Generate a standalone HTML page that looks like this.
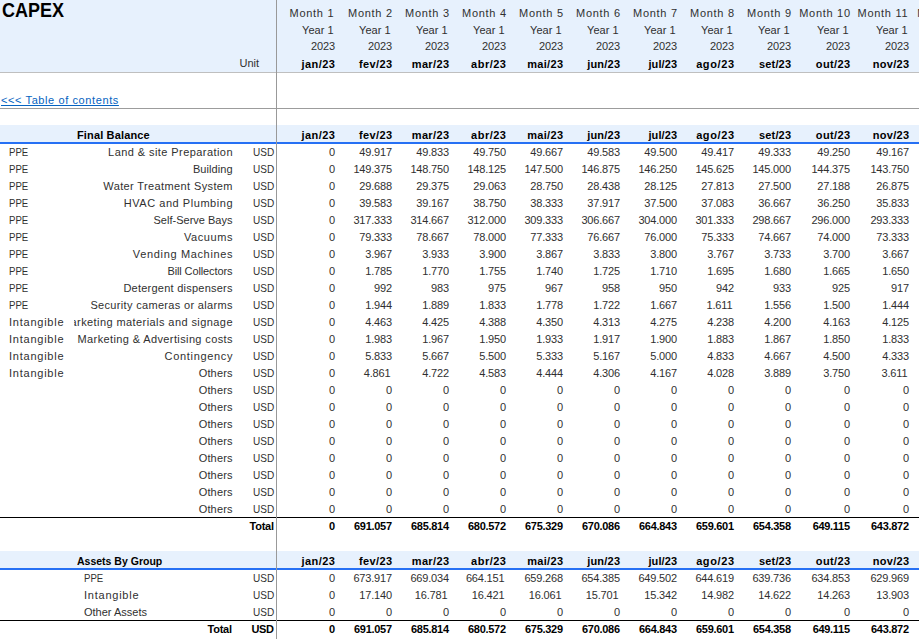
<!DOCTYPE html>
<html><head><meta charset="utf-8"><style>
html,body{margin:0;padding:0;background:#fff;}
body{width:919px;height:639px;position:relative;overflow:hidden;font-family:"Liberation Sans",sans-serif;color:#303030;}
.t{position:absolute;white-space:nowrap;font-size:11px;line-height:20px;}
.r{position:absolute;}
.clip{position:absolute;overflow:hidden;}
</style></head><body>
<div class="r" style="left:0px;top:0px;width:919px;height:72px;background:#e7f1fd"></div><div class="r" style="left:0px;top:72px;width:919px;height:1px;background:#bfbfbf"></div><div class="r" style="left:0px;top:108px;width:919px;height:1px;background:#9c9c9c"></div><div class="r" style="left:0px;top:125px;width:919px;height:17px;background:#e7f1fd"></div><div class="r" style="left:0px;top:142px;width:919px;height:2px;background:#2670f4"></div><div class="r" style="left:0px;top:517px;width:919px;height:1px;background:#000"></div><div class="r" style="left:0px;top:551px;width:919px;height:17px;background:#e7f1fd"></div><div class="r" style="left:0px;top:568px;width:919px;height:2px;background:#2670f4"></div><div class="r" style="left:0px;top:620px;width:919px;height:1px;background:#000"></div><div class="r" style="left:276px;top:0px;width:1px;height:639px;background:#999"></div>
<div class="t" style="top:0.07px;font-size:20px;line-height:20px;font-weight:bold;color:#000;transform:scaleX(0.899);transform-origin:left center;left:2px;">CAPEX</div>
<div class="t" style="top:3.19px;font-size:11px;letter-spacing:0.70px;right:584.80px;">Month 1</div>
<div class="t" style="top:20.19px;font-size:11px;right:585.50px;">Year 1</div>
<div class="t" style="top:36.19px;font-size:11px;letter-spacing:-0.15px;right:584.15px;">2023</div>
<div class="t" style="top:54.19px;font-size:11px;font-weight:bold;color:#000;letter-spacing:0.48px;right:583.52px;">jan/23</div>
<div class="t" style="top:3.19px;font-size:11px;letter-spacing:0.70px;right:526.30px;">Month 2</div>
<div class="t" style="top:20.19px;font-size:11px;right:528.50px;">Year 1</div>
<div class="t" style="top:36.19px;font-size:11px;letter-spacing:-0.15px;right:527.15px;">2023</div>
<div class="t" style="top:54.19px;font-size:11px;font-weight:bold;color:#000;letter-spacing:0.34px;right:526.66px;">fev/23</div>
<div class="t" style="top:3.19px;font-size:11px;letter-spacing:0.70px;right:469.30px;">Month 3</div>
<div class="t" style="top:20.19px;font-size:11px;right:471.50px;">Year 1</div>
<div class="t" style="top:36.19px;font-size:11px;letter-spacing:-0.15px;right:470.15px;">2023</div>
<div class="t" style="top:54.19px;font-size:11px;font-weight:bold;color:#000;letter-spacing:0.36px;right:469.64px;">mar/23</div>
<div class="t" style="top:3.19px;font-size:11px;letter-spacing:0.70px;right:412.30px;">Month 4</div>
<div class="t" style="top:20.19px;font-size:11px;right:414.50px;">Year 1</div>
<div class="t" style="top:36.19px;font-size:11px;letter-spacing:-0.15px;right:413.15px;">2023</div>
<div class="t" style="top:54.19px;font-size:11px;font-weight:bold;color:#000;letter-spacing:0.50px;right:412.50px;">abr/23</div>
<div class="t" style="top:3.19px;font-size:11px;letter-spacing:0.70px;right:355.30px;">Month 5</div>
<div class="t" style="top:20.19px;font-size:11px;right:357.50px;">Year 1</div>
<div class="t" style="top:36.19px;font-size:11px;letter-spacing:-0.15px;right:356.15px;">2023</div>
<div class="t" style="top:54.19px;font-size:11px;font-weight:bold;color:#000;letter-spacing:0.32px;right:355.68px;">mai/23</div>
<div class="t" style="top:3.19px;font-size:11px;letter-spacing:0.70px;right:298.30px;">Month 6</div>
<div class="t" style="top:20.19px;font-size:11px;right:300.50px;">Year 1</div>
<div class="t" style="top:36.19px;font-size:11px;letter-spacing:-0.15px;right:299.15px;">2023</div>
<div class="t" style="top:54.19px;font-size:11px;font-weight:bold;color:#000;letter-spacing:0.22px;right:298.78px;">jun/23</div>
<div class="t" style="top:3.19px;font-size:11px;letter-spacing:0.70px;right:241.30px;">Month 7</div>
<div class="t" style="top:20.19px;font-size:11px;right:243.50px;">Year 1</div>
<div class="t" style="top:36.19px;font-size:11px;letter-spacing:-0.15px;right:242.15px;">2023</div>
<div class="t" style="top:54.19px;font-size:11px;font-weight:bold;color:#000;letter-spacing:0.08px;right:241.92px;">jul/23</div>
<div class="t" style="top:3.19px;font-size:11px;letter-spacing:0.70px;right:184.30px;">Month 8</div>
<div class="t" style="top:20.19px;font-size:11px;right:186.50px;">Year 1</div>
<div class="t" style="top:36.19px;font-size:11px;letter-spacing:-0.15px;right:185.15px;">2023</div>
<div class="t" style="top:54.19px;font-size:11px;font-weight:bold;color:#000;letter-spacing:0.60px;right:184.40px;">ago/23</div>
<div class="t" style="top:3.19px;font-size:11px;letter-spacing:0.70px;right:127.30px;">Month 9</div>
<div class="t" style="top:20.19px;font-size:11px;right:129.50px;">Year 1</div>
<div class="t" style="top:36.19px;font-size:11px;letter-spacing:-0.15px;right:128.15px;">2023</div>
<div class="t" style="top:54.19px;font-size:11px;font-weight:bold;color:#000;letter-spacing:0.14px;right:127.86px;">set/23</div>
<div class="t" style="top:3.19px;font-size:11px;letter-spacing:0.70px;right:68.30px;">Month 10</div>
<div class="t" style="top:20.19px;font-size:11px;right:70.50px;">Year 1</div>
<div class="t" style="top:36.19px;font-size:11px;letter-spacing:-0.15px;right:69.15px;">2023</div>
<div class="t" style="top:54.19px;font-size:11px;font-weight:bold;color:#000;letter-spacing:0.36px;right:68.64px;">out/23</div>
<div class="t" style="top:3.19px;font-size:11px;letter-spacing:0.70px;right:10.80px;">Month 11</div>
<div class="t" style="top:20.19px;font-size:11px;right:11.50px;">Year 1</div>
<div class="t" style="top:36.19px;font-size:11px;letter-spacing:-0.15px;right:10.15px;">2023</div>
<div class="t" style="top:54.19px;font-size:11px;font-weight:bold;color:#000;letter-spacing:0.28px;right:9.72px;">nov/23</div>
<div class="t" style="top:3.19px;font-size:11px;letter-spacing:0.70px;right:-49.70px;">Month 12</div>
<div class="t" style="top:20.19px;font-size:11px;right:-47.50px;">Year 1</div>
<div class="t" style="top:36.19px;font-size:11px;letter-spacing:-0.15px;right:-48.85px;">2023</div>
<div class="t" style="top:54.19px;font-size:11px;font-weight:bold;color:#000;letter-spacing:0.50px;right:-49.50px;">dez/23</div>
<div class="t" style="top:53.19px;font-size:11px;right:660.00px;">Unit</div>
<div class="t" style="top:90.19px;font-size:11px;color:#0563c1;letter-spacing:0.60px;left:1px;text-decoration:underline;">&lt;&lt;&lt; Table of contents</div>
<div class="t" style="top:125.19px;font-size:11px;font-weight:bold;color:#000;letter-spacing:0.15px;left:77px;">Final Balance</div>
<div class="t" style="top:125.19px;font-size:11px;font-weight:bold;color:#000;letter-spacing:0.48px;right:583.52px;">jan/23</div>
<div class="t" style="top:125.19px;font-size:11px;font-weight:bold;color:#000;letter-spacing:0.34px;right:526.66px;">fev/23</div>
<div class="t" style="top:125.19px;font-size:11px;font-weight:bold;color:#000;letter-spacing:0.36px;right:469.64px;">mar/23</div>
<div class="t" style="top:125.19px;font-size:11px;font-weight:bold;color:#000;letter-spacing:0.50px;right:412.50px;">abr/23</div>
<div class="t" style="top:125.19px;font-size:11px;font-weight:bold;color:#000;letter-spacing:0.32px;right:355.68px;">mai/23</div>
<div class="t" style="top:125.19px;font-size:11px;font-weight:bold;color:#000;letter-spacing:0.22px;right:298.78px;">jun/23</div>
<div class="t" style="top:125.19px;font-size:11px;font-weight:bold;color:#000;letter-spacing:0.08px;right:241.92px;">jul/23</div>
<div class="t" style="top:125.19px;font-size:11px;font-weight:bold;color:#000;letter-spacing:0.60px;right:184.40px;">ago/23</div>
<div class="t" style="top:125.19px;font-size:11px;font-weight:bold;color:#000;letter-spacing:0.14px;right:127.86px;">set/23</div>
<div class="t" style="top:125.19px;font-size:11px;font-weight:bold;color:#000;letter-spacing:0.36px;right:68.64px;">out/23</div>
<div class="t" style="top:125.19px;font-size:11px;font-weight:bold;color:#000;letter-spacing:0.28px;right:9.72px;">nov/23</div>
<div class="t" style="top:125.19px;font-size:11px;font-weight:bold;color:#000;letter-spacing:0.50px;right:-49.50px;">dez/23</div>
<div class="t" style="top:142.19px;font-size:11px;transform:scaleX(0.875);transform-origin:left center;left:9px;">PPE</div>
<div class="clip" style="left:74px;top:142.19px;width:162px;height:20px;"><div class="t" style="top:0;font-size:11px;letter-spacing:0.43px;right:3.07px;">Land &amp; site Preparation</div></div>
<div class="t" style="top:142.19px;font-size:11px;transform:scaleX(0.913);transform-origin:right center;right:645.00px;">USD</div>
<div class="t" style="top:142.19px;font-size:11px;letter-spacing:-0.20px;right:584.20px;">0</div>
<div class="t" style="top:142.19px;font-size:11px;letter-spacing:-0.20px;right:527.20px;">49.917</div>
<div class="t" style="top:142.19px;font-size:11px;letter-spacing:-0.20px;right:470.20px;">49.833</div>
<div class="t" style="top:142.19px;font-size:11px;letter-spacing:-0.20px;right:413.20px;">49.750</div>
<div class="t" style="top:142.19px;font-size:11px;letter-spacing:-0.20px;right:356.20px;">49.667</div>
<div class="t" style="top:142.19px;font-size:11px;letter-spacing:-0.20px;right:299.20px;">49.583</div>
<div class="t" style="top:142.19px;font-size:11px;letter-spacing:-0.20px;right:242.20px;">49.500</div>
<div class="t" style="top:142.19px;font-size:11px;letter-spacing:-0.20px;right:185.20px;">49.417</div>
<div class="t" style="top:142.19px;font-size:11px;letter-spacing:-0.20px;right:128.20px;">49.333</div>
<div class="t" style="top:142.19px;font-size:11px;letter-spacing:-0.20px;right:69.20px;">49.250</div>
<div class="t" style="top:142.19px;font-size:11px;letter-spacing:-0.20px;right:10.20px;">49.167</div>
<div class="t" style="top:159.19px;font-size:11px;transform:scaleX(0.875);transform-origin:left center;left:9px;">PPE</div>
<div class="clip" style="left:74px;top:159.19px;width:162px;height:20px;"><div class="t" style="top:0;font-size:11px;letter-spacing:0.07px;right:3.43px;">Building</div></div>
<div class="t" style="top:159.19px;font-size:11px;transform:scaleX(0.913);transform-origin:right center;right:645.00px;">USD</div>
<div class="t" style="top:159.19px;font-size:11px;letter-spacing:-0.20px;right:584.20px;">0</div>
<div class="t" style="top:159.19px;font-size:11px;letter-spacing:-0.20px;right:527.20px;">149.375</div>
<div class="t" style="top:159.19px;font-size:11px;letter-spacing:-0.20px;right:470.20px;">148.750</div>
<div class="t" style="top:159.19px;font-size:11px;letter-spacing:-0.20px;right:413.20px;">148.125</div>
<div class="t" style="top:159.19px;font-size:11px;letter-spacing:-0.20px;right:356.20px;">147.500</div>
<div class="t" style="top:159.19px;font-size:11px;letter-spacing:-0.20px;right:299.20px;">146.875</div>
<div class="t" style="top:159.19px;font-size:11px;letter-spacing:-0.20px;right:242.20px;">146.250</div>
<div class="t" style="top:159.19px;font-size:11px;letter-spacing:-0.20px;right:185.20px;">145.625</div>
<div class="t" style="top:159.19px;font-size:11px;letter-spacing:-0.20px;right:128.20px;">145.000</div>
<div class="t" style="top:159.19px;font-size:11px;letter-spacing:-0.20px;right:69.20px;">144.375</div>
<div class="t" style="top:159.19px;font-size:11px;letter-spacing:-0.20px;right:10.20px;">143.750</div>
<div class="t" style="top:176.19px;font-size:11px;transform:scaleX(0.875);transform-origin:left center;left:9px;">PPE</div>
<div class="clip" style="left:74px;top:176.19px;width:162px;height:20px;"><div class="t" style="top:0;font-size:11px;letter-spacing:0.38px;right:3.12px;">Water Treatment System</div></div>
<div class="t" style="top:176.19px;font-size:11px;transform:scaleX(0.913);transform-origin:right center;right:645.00px;">USD</div>
<div class="t" style="top:176.19px;font-size:11px;letter-spacing:-0.20px;right:584.20px;">0</div>
<div class="t" style="top:176.19px;font-size:11px;letter-spacing:-0.20px;right:527.20px;">29.688</div>
<div class="t" style="top:176.19px;font-size:11px;letter-spacing:-0.20px;right:470.20px;">29.375</div>
<div class="t" style="top:176.19px;font-size:11px;letter-spacing:-0.20px;right:413.20px;">29.063</div>
<div class="t" style="top:176.19px;font-size:11px;letter-spacing:-0.20px;right:356.20px;">28.750</div>
<div class="t" style="top:176.19px;font-size:11px;letter-spacing:-0.20px;right:299.20px;">28.438</div>
<div class="t" style="top:176.19px;font-size:11px;letter-spacing:-0.20px;right:242.20px;">28.125</div>
<div class="t" style="top:176.19px;font-size:11px;letter-spacing:-0.20px;right:185.20px;">27.813</div>
<div class="t" style="top:176.19px;font-size:11px;letter-spacing:-0.20px;right:128.20px;">27.500</div>
<div class="t" style="top:176.19px;font-size:11px;letter-spacing:-0.20px;right:69.20px;">27.188</div>
<div class="t" style="top:176.19px;font-size:11px;letter-spacing:-0.20px;right:10.20px;">26.875</div>
<div class="t" style="top:193.19px;font-size:11px;transform:scaleX(0.875);transform-origin:left center;left:9px;">PPE</div>
<div class="clip" style="left:74px;top:193.19px;width:162px;height:20px;"><div class="t" style="top:0;font-size:11px;letter-spacing:0.54px;right:2.96px;">HVAC and Plumbing</div></div>
<div class="t" style="top:193.19px;font-size:11px;transform:scaleX(0.913);transform-origin:right center;right:645.00px;">USD</div>
<div class="t" style="top:193.19px;font-size:11px;letter-spacing:-0.20px;right:584.20px;">0</div>
<div class="t" style="top:193.19px;font-size:11px;letter-spacing:-0.20px;right:527.20px;">39.583</div>
<div class="t" style="top:193.19px;font-size:11px;letter-spacing:-0.20px;right:470.20px;">39.167</div>
<div class="t" style="top:193.19px;font-size:11px;letter-spacing:-0.20px;right:413.20px;">38.750</div>
<div class="t" style="top:193.19px;font-size:11px;letter-spacing:-0.20px;right:356.20px;">38.333</div>
<div class="t" style="top:193.19px;font-size:11px;letter-spacing:-0.20px;right:299.20px;">37.917</div>
<div class="t" style="top:193.19px;font-size:11px;letter-spacing:-0.20px;right:242.20px;">37.500</div>
<div class="t" style="top:193.19px;font-size:11px;letter-spacing:-0.20px;right:185.20px;">37.083</div>
<div class="t" style="top:193.19px;font-size:11px;letter-spacing:-0.20px;right:128.20px;">36.667</div>
<div class="t" style="top:193.19px;font-size:11px;letter-spacing:-0.20px;right:69.20px;">36.250</div>
<div class="t" style="top:193.19px;font-size:11px;letter-spacing:-0.20px;right:10.20px;">35.833</div>
<div class="t" style="top:210.19px;font-size:11px;transform:scaleX(0.875);transform-origin:left center;left:9px;">PPE</div>
<div class="clip" style="left:74px;top:210.19px;width:162px;height:20px;"><div class="t" style="top:0;font-size:11px;letter-spacing:0.01px;right:3.49px;">Self-Serve Bays</div></div>
<div class="t" style="top:210.19px;font-size:11px;transform:scaleX(0.913);transform-origin:right center;right:645.00px;">USD</div>
<div class="t" style="top:210.19px;font-size:11px;letter-spacing:-0.20px;right:584.20px;">0</div>
<div class="t" style="top:210.19px;font-size:11px;letter-spacing:-0.20px;right:527.20px;">317.333</div>
<div class="t" style="top:210.19px;font-size:11px;letter-spacing:-0.20px;right:470.20px;">314.667</div>
<div class="t" style="top:210.19px;font-size:11px;letter-spacing:-0.20px;right:413.20px;">312.000</div>
<div class="t" style="top:210.19px;font-size:11px;letter-spacing:-0.20px;right:356.20px;">309.333</div>
<div class="t" style="top:210.19px;font-size:11px;letter-spacing:-0.20px;right:299.20px;">306.667</div>
<div class="t" style="top:210.19px;font-size:11px;letter-spacing:-0.20px;right:242.20px;">304.000</div>
<div class="t" style="top:210.19px;font-size:11px;letter-spacing:-0.20px;right:185.20px;">301.333</div>
<div class="t" style="top:210.19px;font-size:11px;letter-spacing:-0.20px;right:128.20px;">298.667</div>
<div class="t" style="top:210.19px;font-size:11px;letter-spacing:-0.20px;right:69.20px;">296.000</div>
<div class="t" style="top:210.19px;font-size:11px;letter-spacing:-0.20px;right:10.20px;">293.333</div>
<div class="t" style="top:227.19px;font-size:11px;transform:scaleX(0.875);transform-origin:left center;left:9px;">PPE</div>
<div class="clip" style="left:74px;top:227.19px;width:162px;height:20px;"><div class="t" style="top:0;font-size:11px;letter-spacing:0.58px;right:2.92px;">Vacuums</div></div>
<div class="t" style="top:227.19px;font-size:11px;transform:scaleX(0.913);transform-origin:right center;right:645.00px;">USD</div>
<div class="t" style="top:227.19px;font-size:11px;letter-spacing:-0.20px;right:584.20px;">0</div>
<div class="t" style="top:227.19px;font-size:11px;letter-spacing:-0.20px;right:527.20px;">79.333</div>
<div class="t" style="top:227.19px;font-size:11px;letter-spacing:-0.20px;right:470.20px;">78.667</div>
<div class="t" style="top:227.19px;font-size:11px;letter-spacing:-0.20px;right:413.20px;">78.000</div>
<div class="t" style="top:227.19px;font-size:11px;letter-spacing:-0.20px;right:356.20px;">77.333</div>
<div class="t" style="top:227.19px;font-size:11px;letter-spacing:-0.20px;right:299.20px;">76.667</div>
<div class="t" style="top:227.19px;font-size:11px;letter-spacing:-0.20px;right:242.20px;">76.000</div>
<div class="t" style="top:227.19px;font-size:11px;letter-spacing:-0.20px;right:185.20px;">75.333</div>
<div class="t" style="top:227.19px;font-size:11px;letter-spacing:-0.20px;right:128.20px;">74.667</div>
<div class="t" style="top:227.19px;font-size:11px;letter-spacing:-0.20px;right:69.20px;">74.000</div>
<div class="t" style="top:227.19px;font-size:11px;letter-spacing:-0.20px;right:10.20px;">73.333</div>
<div class="t" style="top:244.19px;font-size:11px;transform:scaleX(0.875);transform-origin:left center;left:9px;">PPE</div>
<div class="clip" style="left:74px;top:244.19px;width:162px;height:20px;"><div class="t" style="top:0;font-size:11px;letter-spacing:0.65px;right:2.85px;">Vending Machines</div></div>
<div class="t" style="top:244.19px;font-size:11px;transform:scaleX(0.913);transform-origin:right center;right:645.00px;">USD</div>
<div class="t" style="top:244.19px;font-size:11px;letter-spacing:-0.20px;right:584.20px;">0</div>
<div class="t" style="top:244.19px;font-size:11px;letter-spacing:-0.20px;right:527.20px;">3.967</div>
<div class="t" style="top:244.19px;font-size:11px;letter-spacing:-0.20px;right:470.20px;">3.933</div>
<div class="t" style="top:244.19px;font-size:11px;letter-spacing:-0.20px;right:413.20px;">3.900</div>
<div class="t" style="top:244.19px;font-size:11px;letter-spacing:-0.20px;right:356.20px;">3.867</div>
<div class="t" style="top:244.19px;font-size:11px;letter-spacing:-0.20px;right:299.20px;">3.833</div>
<div class="t" style="top:244.19px;font-size:11px;letter-spacing:-0.20px;right:242.20px;">3.800</div>
<div class="t" style="top:244.19px;font-size:11px;letter-spacing:-0.20px;right:185.20px;">3.767</div>
<div class="t" style="top:244.19px;font-size:11px;letter-spacing:-0.20px;right:128.20px;">3.733</div>
<div class="t" style="top:244.19px;font-size:11px;letter-spacing:-0.20px;right:69.20px;">3.700</div>
<div class="t" style="top:244.19px;font-size:11px;letter-spacing:-0.20px;right:10.20px;">3.667</div>
<div class="t" style="top:261.19px;font-size:11px;transform:scaleX(0.875);transform-origin:left center;left:9px;">PPE</div>
<div class="clip" style="left:74px;top:261.19px;width:162px;height:20px;"><div class="t" style="top:0;font-size:11px;letter-spacing:-0.11px;right:3.61px;">Bill Collectors</div></div>
<div class="t" style="top:261.19px;font-size:11px;transform:scaleX(0.913);transform-origin:right center;right:645.00px;">USD</div>
<div class="t" style="top:261.19px;font-size:11px;letter-spacing:-0.20px;right:584.20px;">0</div>
<div class="t" style="top:261.19px;font-size:11px;letter-spacing:-0.20px;right:527.20px;">1.785</div>
<div class="t" style="top:261.19px;font-size:11px;letter-spacing:-0.20px;right:470.20px;">1.770</div>
<div class="t" style="top:261.19px;font-size:11px;letter-spacing:-0.20px;right:413.20px;">1.755</div>
<div class="t" style="top:261.19px;font-size:11px;letter-spacing:-0.20px;right:356.20px;">1.740</div>
<div class="t" style="top:261.19px;font-size:11px;letter-spacing:-0.20px;right:299.20px;">1.725</div>
<div class="t" style="top:261.19px;font-size:11px;letter-spacing:-0.20px;right:242.20px;">1.710</div>
<div class="t" style="top:261.19px;font-size:11px;letter-spacing:-0.20px;right:185.20px;">1.695</div>
<div class="t" style="top:261.19px;font-size:11px;letter-spacing:-0.20px;right:128.20px;">1.680</div>
<div class="t" style="top:261.19px;font-size:11px;letter-spacing:-0.20px;right:69.20px;">1.665</div>
<div class="t" style="top:261.19px;font-size:11px;letter-spacing:-0.20px;right:10.20px;">1.650</div>
<div class="t" style="top:278.19px;font-size:11px;transform:scaleX(0.875);transform-origin:left center;left:9px;">PPE</div>
<div class="clip" style="left:74px;top:278.19px;width:162px;height:20px;"><div class="t" style="top:0;font-size:11px;letter-spacing:0.24px;right:3.26px;">Detergent dispensers</div></div>
<div class="t" style="top:278.19px;font-size:11px;transform:scaleX(0.913);transform-origin:right center;right:645.00px;">USD</div>
<div class="t" style="top:278.19px;font-size:11px;letter-spacing:-0.20px;right:584.20px;">0</div>
<div class="t" style="top:278.19px;font-size:11px;letter-spacing:-0.20px;right:527.20px;">992</div>
<div class="t" style="top:278.19px;font-size:11px;letter-spacing:-0.20px;right:470.20px;">983</div>
<div class="t" style="top:278.19px;font-size:11px;letter-spacing:-0.20px;right:413.20px;">975</div>
<div class="t" style="top:278.19px;font-size:11px;letter-spacing:-0.20px;right:356.20px;">967</div>
<div class="t" style="top:278.19px;font-size:11px;letter-spacing:-0.20px;right:299.20px;">958</div>
<div class="t" style="top:278.19px;font-size:11px;letter-spacing:-0.20px;right:242.20px;">950</div>
<div class="t" style="top:278.19px;font-size:11px;letter-spacing:-0.20px;right:185.20px;">942</div>
<div class="t" style="top:278.19px;font-size:11px;letter-spacing:-0.20px;right:128.20px;">933</div>
<div class="t" style="top:278.19px;font-size:11px;letter-spacing:-0.20px;right:69.20px;">925</div>
<div class="t" style="top:278.19px;font-size:11px;letter-spacing:-0.20px;right:10.20px;">917</div>
<div class="t" style="top:295.19px;font-size:11px;transform:scaleX(0.875);transform-origin:left center;left:9px;">PPE</div>
<div class="clip" style="left:74px;top:295.19px;width:162px;height:20px;"><div class="t" style="top:0;font-size:11px;letter-spacing:0.33px;right:3.17px;">Security cameras or alarms</div></div>
<div class="t" style="top:295.19px;font-size:11px;transform:scaleX(0.913);transform-origin:right center;right:645.00px;">USD</div>
<div class="t" style="top:295.19px;font-size:11px;letter-spacing:-0.20px;right:584.20px;">0</div>
<div class="t" style="top:295.19px;font-size:11px;letter-spacing:-0.20px;right:527.20px;">1.944</div>
<div class="t" style="top:295.19px;font-size:11px;letter-spacing:-0.20px;right:470.20px;">1.889</div>
<div class="t" style="top:295.19px;font-size:11px;letter-spacing:-0.20px;right:413.20px;">1.833</div>
<div class="t" style="top:295.19px;font-size:11px;letter-spacing:-0.20px;right:356.20px;">1.778</div>
<div class="t" style="top:295.19px;font-size:11px;letter-spacing:-0.20px;right:299.20px;">1.722</div>
<div class="t" style="top:295.19px;font-size:11px;letter-spacing:-0.20px;right:242.20px;">1.667</div>
<div class="t" style="top:295.19px;font-size:11px;letter-spacing:-0.20px;right:186.70px;">1.611</div>
<div class="t" style="top:295.19px;font-size:11px;letter-spacing:-0.20px;right:128.20px;">1.556</div>
<div class="t" style="top:295.19px;font-size:11px;letter-spacing:-0.20px;right:69.20px;">1.500</div>
<div class="t" style="top:295.19px;font-size:11px;letter-spacing:-0.20px;right:10.20px;">1.444</div>
<div class="t" style="top:312.19px;font-size:11px;letter-spacing:0.76px;left:9px;">Intangible</div>
<div class="clip" style="left:74px;top:312.19px;width:162px;height:20px;"><div class="t" style="top:0;font-size:11px;letter-spacing:0.42px;right:3.08px;">Marketing materials and signage</div></div>
<div class="t" style="top:312.19px;font-size:11px;transform:scaleX(0.913);transform-origin:right center;right:645.00px;">USD</div>
<div class="t" style="top:312.19px;font-size:11px;letter-spacing:-0.20px;right:584.20px;">0</div>
<div class="t" style="top:312.19px;font-size:11px;letter-spacing:-0.20px;right:527.20px;">4.463</div>
<div class="t" style="top:312.19px;font-size:11px;letter-spacing:-0.20px;right:470.20px;">4.425</div>
<div class="t" style="top:312.19px;font-size:11px;letter-spacing:-0.20px;right:413.20px;">4.388</div>
<div class="t" style="top:312.19px;font-size:11px;letter-spacing:-0.20px;right:356.20px;">4.350</div>
<div class="t" style="top:312.19px;font-size:11px;letter-spacing:-0.20px;right:299.20px;">4.313</div>
<div class="t" style="top:312.19px;font-size:11px;letter-spacing:-0.20px;right:242.20px;">4.275</div>
<div class="t" style="top:312.19px;font-size:11px;letter-spacing:-0.20px;right:185.20px;">4.238</div>
<div class="t" style="top:312.19px;font-size:11px;letter-spacing:-0.20px;right:128.20px;">4.200</div>
<div class="t" style="top:312.19px;font-size:11px;letter-spacing:-0.20px;right:69.20px;">4.163</div>
<div class="t" style="top:312.19px;font-size:11px;letter-spacing:-0.20px;right:10.20px;">4.125</div>
<div class="t" style="top:329.19px;font-size:11px;letter-spacing:0.76px;left:9px;">Intangible</div>
<div class="clip" style="left:74px;top:329.19px;width:162px;height:20px;"><div class="t" style="top:0;font-size:11px;letter-spacing:0.38px;right:3.12px;">Marketing &amp; Advertising costs</div></div>
<div class="t" style="top:329.19px;font-size:11px;transform:scaleX(0.913);transform-origin:right center;right:645.00px;">USD</div>
<div class="t" style="top:329.19px;font-size:11px;letter-spacing:-0.20px;right:584.20px;">0</div>
<div class="t" style="top:329.19px;font-size:11px;letter-spacing:-0.20px;right:527.20px;">1.983</div>
<div class="t" style="top:329.19px;font-size:11px;letter-spacing:-0.20px;right:470.20px;">1.967</div>
<div class="t" style="top:329.19px;font-size:11px;letter-spacing:-0.20px;right:413.20px;">1.950</div>
<div class="t" style="top:329.19px;font-size:11px;letter-spacing:-0.20px;right:356.20px;">1.933</div>
<div class="t" style="top:329.19px;font-size:11px;letter-spacing:-0.20px;right:299.20px;">1.917</div>
<div class="t" style="top:329.19px;font-size:11px;letter-spacing:-0.20px;right:242.20px;">1.900</div>
<div class="t" style="top:329.19px;font-size:11px;letter-spacing:-0.20px;right:185.20px;">1.883</div>
<div class="t" style="top:329.19px;font-size:11px;letter-spacing:-0.20px;right:128.20px;">1.867</div>
<div class="t" style="top:329.19px;font-size:11px;letter-spacing:-0.20px;right:69.20px;">1.850</div>
<div class="t" style="top:329.19px;font-size:11px;letter-spacing:-0.20px;right:10.20px;">1.833</div>
<div class="t" style="top:346.19px;font-size:11px;letter-spacing:0.76px;left:9px;">Intangible</div>
<div class="clip" style="left:74px;top:346.19px;width:162px;height:20px;"><div class="t" style="top:0;font-size:11px;letter-spacing:0.68px;right:2.82px;">Contingency</div></div>
<div class="t" style="top:346.19px;font-size:11px;transform:scaleX(0.913);transform-origin:right center;right:645.00px;">USD</div>
<div class="t" style="top:346.19px;font-size:11px;letter-spacing:-0.20px;right:584.20px;">0</div>
<div class="t" style="top:346.19px;font-size:11px;letter-spacing:-0.20px;right:527.20px;">5.833</div>
<div class="t" style="top:346.19px;font-size:11px;letter-spacing:-0.20px;right:470.20px;">5.667</div>
<div class="t" style="top:346.19px;font-size:11px;letter-spacing:-0.20px;right:413.20px;">5.500</div>
<div class="t" style="top:346.19px;font-size:11px;letter-spacing:-0.20px;right:356.20px;">5.333</div>
<div class="t" style="top:346.19px;font-size:11px;letter-spacing:-0.20px;right:299.20px;">5.167</div>
<div class="t" style="top:346.19px;font-size:11px;letter-spacing:-0.20px;right:242.20px;">5.000</div>
<div class="t" style="top:346.19px;font-size:11px;letter-spacing:-0.20px;right:185.20px;">4.833</div>
<div class="t" style="top:346.19px;font-size:11px;letter-spacing:-0.20px;right:128.20px;">4.667</div>
<div class="t" style="top:346.19px;font-size:11px;letter-spacing:-0.20px;right:69.20px;">4.500</div>
<div class="t" style="top:346.19px;font-size:11px;letter-spacing:-0.20px;right:10.20px;">4.333</div>
<div class="t" style="top:363.19px;font-size:11px;letter-spacing:0.76px;left:9px;">Intangible</div>
<div class="clip" style="left:74px;top:363.19px;width:162px;height:20px;"><div class="t" style="top:0;font-size:11px;letter-spacing:0.16px;right:3.34px;">Others</div></div>
<div class="t" style="top:363.19px;font-size:11px;transform:scaleX(0.913);transform-origin:right center;right:645.00px;">USD</div>
<div class="t" style="top:363.19px;font-size:11px;letter-spacing:-0.20px;right:584.20px;">0</div>
<div class="t" style="top:363.19px;font-size:11px;letter-spacing:-0.20px;right:528.70px;">4.861</div>
<div class="t" style="top:363.19px;font-size:11px;letter-spacing:-0.20px;right:470.20px;">4.722</div>
<div class="t" style="top:363.19px;font-size:11px;letter-spacing:-0.20px;right:413.20px;">4.583</div>
<div class="t" style="top:363.19px;font-size:11px;letter-spacing:-0.20px;right:356.20px;">4.444</div>
<div class="t" style="top:363.19px;font-size:11px;letter-spacing:-0.20px;right:299.20px;">4.306</div>
<div class="t" style="top:363.19px;font-size:11px;letter-spacing:-0.20px;right:242.20px;">4.167</div>
<div class="t" style="top:363.19px;font-size:11px;letter-spacing:-0.20px;right:185.20px;">4.028</div>
<div class="t" style="top:363.19px;font-size:11px;letter-spacing:-0.20px;right:128.20px;">3.889</div>
<div class="t" style="top:363.19px;font-size:11px;letter-spacing:-0.20px;right:69.20px;">3.750</div>
<div class="t" style="top:363.19px;font-size:11px;letter-spacing:-0.20px;right:11.70px;">3.611</div>
<div class="clip" style="left:74px;top:380.19px;width:162px;height:20px;"><div class="t" style="top:0;font-size:11px;letter-spacing:0.16px;right:3.34px;">Others</div></div>
<div class="t" style="top:380.19px;font-size:11px;transform:scaleX(0.913);transform-origin:right center;right:645.00px;">USD</div>
<div class="t" style="top:380.19px;font-size:11px;letter-spacing:-0.20px;right:584.20px;">0</div>
<div class="t" style="top:380.19px;font-size:11px;letter-spacing:-0.20px;right:527.20px;">0</div>
<div class="t" style="top:380.19px;font-size:11px;letter-spacing:-0.20px;right:470.20px;">0</div>
<div class="t" style="top:380.19px;font-size:11px;letter-spacing:-0.20px;right:413.20px;">0</div>
<div class="t" style="top:380.19px;font-size:11px;letter-spacing:-0.20px;right:356.20px;">0</div>
<div class="t" style="top:380.19px;font-size:11px;letter-spacing:-0.20px;right:299.20px;">0</div>
<div class="t" style="top:380.19px;font-size:11px;letter-spacing:-0.20px;right:242.20px;">0</div>
<div class="t" style="top:380.19px;font-size:11px;letter-spacing:-0.20px;right:185.20px;">0</div>
<div class="t" style="top:380.19px;font-size:11px;letter-spacing:-0.20px;right:128.20px;">0</div>
<div class="t" style="top:380.19px;font-size:11px;letter-spacing:-0.20px;right:69.20px;">0</div>
<div class="t" style="top:380.19px;font-size:11px;letter-spacing:-0.20px;right:10.20px;">0</div>
<div class="clip" style="left:74px;top:397.19px;width:162px;height:20px;"><div class="t" style="top:0;font-size:11px;letter-spacing:0.16px;right:3.34px;">Others</div></div>
<div class="t" style="top:397.19px;font-size:11px;transform:scaleX(0.913);transform-origin:right center;right:645.00px;">USD</div>
<div class="t" style="top:397.19px;font-size:11px;letter-spacing:-0.20px;right:584.20px;">0</div>
<div class="t" style="top:397.19px;font-size:11px;letter-spacing:-0.20px;right:527.20px;">0</div>
<div class="t" style="top:397.19px;font-size:11px;letter-spacing:-0.20px;right:470.20px;">0</div>
<div class="t" style="top:397.19px;font-size:11px;letter-spacing:-0.20px;right:413.20px;">0</div>
<div class="t" style="top:397.19px;font-size:11px;letter-spacing:-0.20px;right:356.20px;">0</div>
<div class="t" style="top:397.19px;font-size:11px;letter-spacing:-0.20px;right:299.20px;">0</div>
<div class="t" style="top:397.19px;font-size:11px;letter-spacing:-0.20px;right:242.20px;">0</div>
<div class="t" style="top:397.19px;font-size:11px;letter-spacing:-0.20px;right:185.20px;">0</div>
<div class="t" style="top:397.19px;font-size:11px;letter-spacing:-0.20px;right:128.20px;">0</div>
<div class="t" style="top:397.19px;font-size:11px;letter-spacing:-0.20px;right:69.20px;">0</div>
<div class="t" style="top:397.19px;font-size:11px;letter-spacing:-0.20px;right:10.20px;">0</div>
<div class="clip" style="left:74px;top:414.19px;width:162px;height:20px;"><div class="t" style="top:0;font-size:11px;letter-spacing:0.16px;right:3.34px;">Others</div></div>
<div class="t" style="top:414.19px;font-size:11px;transform:scaleX(0.913);transform-origin:right center;right:645.00px;">USD</div>
<div class="t" style="top:414.19px;font-size:11px;letter-spacing:-0.20px;right:584.20px;">0</div>
<div class="t" style="top:414.19px;font-size:11px;letter-spacing:-0.20px;right:527.20px;">0</div>
<div class="t" style="top:414.19px;font-size:11px;letter-spacing:-0.20px;right:470.20px;">0</div>
<div class="t" style="top:414.19px;font-size:11px;letter-spacing:-0.20px;right:413.20px;">0</div>
<div class="t" style="top:414.19px;font-size:11px;letter-spacing:-0.20px;right:356.20px;">0</div>
<div class="t" style="top:414.19px;font-size:11px;letter-spacing:-0.20px;right:299.20px;">0</div>
<div class="t" style="top:414.19px;font-size:11px;letter-spacing:-0.20px;right:242.20px;">0</div>
<div class="t" style="top:414.19px;font-size:11px;letter-spacing:-0.20px;right:185.20px;">0</div>
<div class="t" style="top:414.19px;font-size:11px;letter-spacing:-0.20px;right:128.20px;">0</div>
<div class="t" style="top:414.19px;font-size:11px;letter-spacing:-0.20px;right:69.20px;">0</div>
<div class="t" style="top:414.19px;font-size:11px;letter-spacing:-0.20px;right:10.20px;">0</div>
<div class="clip" style="left:74px;top:431.19px;width:162px;height:20px;"><div class="t" style="top:0;font-size:11px;letter-spacing:0.16px;right:3.34px;">Others</div></div>
<div class="t" style="top:431.19px;font-size:11px;transform:scaleX(0.913);transform-origin:right center;right:645.00px;">USD</div>
<div class="t" style="top:431.19px;font-size:11px;letter-spacing:-0.20px;right:584.20px;">0</div>
<div class="t" style="top:431.19px;font-size:11px;letter-spacing:-0.20px;right:527.20px;">0</div>
<div class="t" style="top:431.19px;font-size:11px;letter-spacing:-0.20px;right:470.20px;">0</div>
<div class="t" style="top:431.19px;font-size:11px;letter-spacing:-0.20px;right:413.20px;">0</div>
<div class="t" style="top:431.19px;font-size:11px;letter-spacing:-0.20px;right:356.20px;">0</div>
<div class="t" style="top:431.19px;font-size:11px;letter-spacing:-0.20px;right:299.20px;">0</div>
<div class="t" style="top:431.19px;font-size:11px;letter-spacing:-0.20px;right:242.20px;">0</div>
<div class="t" style="top:431.19px;font-size:11px;letter-spacing:-0.20px;right:185.20px;">0</div>
<div class="t" style="top:431.19px;font-size:11px;letter-spacing:-0.20px;right:128.20px;">0</div>
<div class="t" style="top:431.19px;font-size:11px;letter-spacing:-0.20px;right:69.20px;">0</div>
<div class="t" style="top:431.19px;font-size:11px;letter-spacing:-0.20px;right:10.20px;">0</div>
<div class="clip" style="left:74px;top:448.19px;width:162px;height:20px;"><div class="t" style="top:0;font-size:11px;letter-spacing:0.16px;right:3.34px;">Others</div></div>
<div class="t" style="top:448.19px;font-size:11px;transform:scaleX(0.913);transform-origin:right center;right:645.00px;">USD</div>
<div class="t" style="top:448.19px;font-size:11px;letter-spacing:-0.20px;right:584.20px;">0</div>
<div class="t" style="top:448.19px;font-size:11px;letter-spacing:-0.20px;right:527.20px;">0</div>
<div class="t" style="top:448.19px;font-size:11px;letter-spacing:-0.20px;right:470.20px;">0</div>
<div class="t" style="top:448.19px;font-size:11px;letter-spacing:-0.20px;right:413.20px;">0</div>
<div class="t" style="top:448.19px;font-size:11px;letter-spacing:-0.20px;right:356.20px;">0</div>
<div class="t" style="top:448.19px;font-size:11px;letter-spacing:-0.20px;right:299.20px;">0</div>
<div class="t" style="top:448.19px;font-size:11px;letter-spacing:-0.20px;right:242.20px;">0</div>
<div class="t" style="top:448.19px;font-size:11px;letter-spacing:-0.20px;right:185.20px;">0</div>
<div class="t" style="top:448.19px;font-size:11px;letter-spacing:-0.20px;right:128.20px;">0</div>
<div class="t" style="top:448.19px;font-size:11px;letter-spacing:-0.20px;right:69.20px;">0</div>
<div class="t" style="top:448.19px;font-size:11px;letter-spacing:-0.20px;right:10.20px;">0</div>
<div class="clip" style="left:74px;top:465.19px;width:162px;height:20px;"><div class="t" style="top:0;font-size:11px;letter-spacing:0.16px;right:3.34px;">Others</div></div>
<div class="t" style="top:465.19px;font-size:11px;transform:scaleX(0.913);transform-origin:right center;right:645.00px;">USD</div>
<div class="t" style="top:465.19px;font-size:11px;letter-spacing:-0.20px;right:584.20px;">0</div>
<div class="t" style="top:465.19px;font-size:11px;letter-spacing:-0.20px;right:527.20px;">0</div>
<div class="t" style="top:465.19px;font-size:11px;letter-spacing:-0.20px;right:470.20px;">0</div>
<div class="t" style="top:465.19px;font-size:11px;letter-spacing:-0.20px;right:413.20px;">0</div>
<div class="t" style="top:465.19px;font-size:11px;letter-spacing:-0.20px;right:356.20px;">0</div>
<div class="t" style="top:465.19px;font-size:11px;letter-spacing:-0.20px;right:299.20px;">0</div>
<div class="t" style="top:465.19px;font-size:11px;letter-spacing:-0.20px;right:242.20px;">0</div>
<div class="t" style="top:465.19px;font-size:11px;letter-spacing:-0.20px;right:185.20px;">0</div>
<div class="t" style="top:465.19px;font-size:11px;letter-spacing:-0.20px;right:128.20px;">0</div>
<div class="t" style="top:465.19px;font-size:11px;letter-spacing:-0.20px;right:69.20px;">0</div>
<div class="t" style="top:465.19px;font-size:11px;letter-spacing:-0.20px;right:10.20px;">0</div>
<div class="clip" style="left:74px;top:482.19px;width:162px;height:20px;"><div class="t" style="top:0;font-size:11px;letter-spacing:0.16px;right:3.34px;">Others</div></div>
<div class="t" style="top:482.19px;font-size:11px;transform:scaleX(0.913);transform-origin:right center;right:645.00px;">USD</div>
<div class="t" style="top:482.19px;font-size:11px;letter-spacing:-0.20px;right:584.20px;">0</div>
<div class="t" style="top:482.19px;font-size:11px;letter-spacing:-0.20px;right:527.20px;">0</div>
<div class="t" style="top:482.19px;font-size:11px;letter-spacing:-0.20px;right:470.20px;">0</div>
<div class="t" style="top:482.19px;font-size:11px;letter-spacing:-0.20px;right:413.20px;">0</div>
<div class="t" style="top:482.19px;font-size:11px;letter-spacing:-0.20px;right:356.20px;">0</div>
<div class="t" style="top:482.19px;font-size:11px;letter-spacing:-0.20px;right:299.20px;">0</div>
<div class="t" style="top:482.19px;font-size:11px;letter-spacing:-0.20px;right:242.20px;">0</div>
<div class="t" style="top:482.19px;font-size:11px;letter-spacing:-0.20px;right:185.20px;">0</div>
<div class="t" style="top:482.19px;font-size:11px;letter-spacing:-0.20px;right:128.20px;">0</div>
<div class="t" style="top:482.19px;font-size:11px;letter-spacing:-0.20px;right:69.20px;">0</div>
<div class="t" style="top:482.19px;font-size:11px;letter-spacing:-0.20px;right:10.20px;">0</div>
<div class="clip" style="left:74px;top:499.19px;width:162px;height:20px;"><div class="t" style="top:0;font-size:11px;letter-spacing:0.16px;right:3.34px;">Others</div></div>
<div class="t" style="top:499.19px;font-size:11px;transform:scaleX(0.913);transform-origin:right center;right:645.00px;">USD</div>
<div class="t" style="top:499.19px;font-size:11px;letter-spacing:-0.20px;right:584.20px;">0</div>
<div class="t" style="top:499.19px;font-size:11px;letter-spacing:-0.20px;right:527.20px;">0</div>
<div class="t" style="top:499.19px;font-size:11px;letter-spacing:-0.20px;right:470.20px;">0</div>
<div class="t" style="top:499.19px;font-size:11px;letter-spacing:-0.20px;right:413.20px;">0</div>
<div class="t" style="top:499.19px;font-size:11px;letter-spacing:-0.20px;right:356.20px;">0</div>
<div class="t" style="top:499.19px;font-size:11px;letter-spacing:-0.20px;right:299.20px;">0</div>
<div class="t" style="top:499.19px;font-size:11px;letter-spacing:-0.20px;right:242.20px;">0</div>
<div class="t" style="top:499.19px;font-size:11px;letter-spacing:-0.20px;right:185.20px;">0</div>
<div class="t" style="top:499.19px;font-size:11px;letter-spacing:-0.20px;right:128.20px;">0</div>
<div class="t" style="top:499.19px;font-size:11px;letter-spacing:-0.20px;right:69.20px;">0</div>
<div class="t" style="top:499.19px;font-size:11px;letter-spacing:-0.20px;right:10.20px;">0</div>
<div class="t" style="top:516.19px;font-size:11px;font-weight:bold;color:#000;letter-spacing:-0.25px;right:645.25px;">Total</div>
<div class="t" style="top:516.19px;font-size:11px;font-weight:bold;color:#000;letter-spacing:-0.30px;right:584.30px;">0</div>
<div class="t" style="top:516.19px;font-size:11px;font-weight:bold;color:#000;letter-spacing:-0.30px;right:527.30px;">691.057</div>
<div class="t" style="top:516.19px;font-size:11px;font-weight:bold;color:#000;letter-spacing:-0.30px;right:470.30px;">685.814</div>
<div class="t" style="top:516.19px;font-size:11px;font-weight:bold;color:#000;letter-spacing:-0.30px;right:413.30px;">680.572</div>
<div class="t" style="top:516.19px;font-size:11px;font-weight:bold;color:#000;letter-spacing:-0.30px;right:356.30px;">675.329</div>
<div class="t" style="top:516.19px;font-size:11px;font-weight:bold;color:#000;letter-spacing:-0.30px;right:299.30px;">670.086</div>
<div class="t" style="top:516.19px;font-size:11px;font-weight:bold;color:#000;letter-spacing:-0.30px;right:242.30px;">664.843</div>
<div class="t" style="top:516.19px;font-size:11px;font-weight:bold;color:#000;letter-spacing:-0.30px;right:185.30px;">659.601</div>
<div class="t" style="top:516.19px;font-size:11px;font-weight:bold;color:#000;letter-spacing:-0.30px;right:128.30px;">654.358</div>
<div class="t" style="top:516.19px;font-size:11px;font-weight:bold;color:#000;letter-spacing:-0.30px;right:69.30px;">649.115</div>
<div class="t" style="top:516.19px;font-size:11px;font-weight:bold;color:#000;letter-spacing:-0.30px;right:10.30px;">643.872</div>
<div class="t" style="top:551.19px;font-size:11px;font-weight:bold;color:#000;transform:scaleX(0.955);transform-origin:left center;left:77px;">Assets By Group</div>
<div class="t" style="top:551.19px;font-size:11px;font-weight:bold;color:#000;letter-spacing:0.48px;right:583.52px;">jan/23</div>
<div class="t" style="top:551.19px;font-size:11px;font-weight:bold;color:#000;letter-spacing:0.34px;right:526.66px;">fev/23</div>
<div class="t" style="top:551.19px;font-size:11px;font-weight:bold;color:#000;letter-spacing:0.36px;right:469.64px;">mar/23</div>
<div class="t" style="top:551.19px;font-size:11px;font-weight:bold;color:#000;letter-spacing:0.50px;right:412.50px;">abr/23</div>
<div class="t" style="top:551.19px;font-size:11px;font-weight:bold;color:#000;letter-spacing:0.32px;right:355.68px;">mai/23</div>
<div class="t" style="top:551.19px;font-size:11px;font-weight:bold;color:#000;letter-spacing:0.22px;right:298.78px;">jun/23</div>
<div class="t" style="top:551.19px;font-size:11px;font-weight:bold;color:#000;letter-spacing:0.08px;right:241.92px;">jul/23</div>
<div class="t" style="top:551.19px;font-size:11px;font-weight:bold;color:#000;letter-spacing:0.60px;right:184.40px;">ago/23</div>
<div class="t" style="top:551.19px;font-size:11px;font-weight:bold;color:#000;letter-spacing:0.14px;right:127.86px;">set/23</div>
<div class="t" style="top:551.19px;font-size:11px;font-weight:bold;color:#000;letter-spacing:0.36px;right:68.64px;">out/23</div>
<div class="t" style="top:551.19px;font-size:11px;font-weight:bold;color:#000;letter-spacing:0.28px;right:9.72px;">nov/23</div>
<div class="t" style="top:551.19px;font-size:11px;font-weight:bold;color:#000;letter-spacing:0.50px;right:-49.50px;">dez/23</div>
<div class="t" style="top:568.19px;font-size:11px;transform:scaleX(0.875);transform-origin:left center;left:84px;">PPE</div>
<div class="t" style="top:568.19px;font-size:11px;transform:scaleX(0.913);transform-origin:right center;right:645.00px;">USD</div>
<div class="t" style="top:568.19px;font-size:11px;letter-spacing:-0.20px;right:584.20px;">0</div>
<div class="t" style="top:568.19px;font-size:11px;letter-spacing:-0.20px;right:527.20px;">673.917</div>
<div class="t" style="top:568.19px;font-size:11px;letter-spacing:-0.20px;right:470.20px;">669.034</div>
<div class="t" style="top:568.19px;font-size:11px;letter-spacing:-0.20px;right:414.70px;">664.151</div>
<div class="t" style="top:568.19px;font-size:11px;letter-spacing:-0.20px;right:356.20px;">659.268</div>
<div class="t" style="top:568.19px;font-size:11px;letter-spacing:-0.20px;right:299.20px;">654.385</div>
<div class="t" style="top:568.19px;font-size:11px;letter-spacing:-0.20px;right:242.20px;">649.502</div>
<div class="t" style="top:568.19px;font-size:11px;letter-spacing:-0.20px;right:185.20px;">644.619</div>
<div class="t" style="top:568.19px;font-size:11px;letter-spacing:-0.20px;right:128.20px;">639.736</div>
<div class="t" style="top:568.19px;font-size:11px;letter-spacing:-0.20px;right:69.20px;">634.853</div>
<div class="t" style="top:568.19px;font-size:11px;letter-spacing:-0.20px;right:10.20px;">629.969</div>
<div class="t" style="top:585.19px;font-size:11px;letter-spacing:0.76px;left:84px;">Intangible</div>
<div class="t" style="top:585.19px;font-size:11px;transform:scaleX(0.913);transform-origin:right center;right:645.00px;">USD</div>
<div class="t" style="top:585.19px;font-size:11px;letter-spacing:-0.20px;right:584.20px;">0</div>
<div class="t" style="top:585.19px;font-size:11px;letter-spacing:-0.20px;right:527.20px;">17.140</div>
<div class="t" style="top:585.19px;font-size:11px;letter-spacing:-0.20px;right:471.70px;">16.781</div>
<div class="t" style="top:585.19px;font-size:11px;letter-spacing:-0.20px;right:414.70px;">16.421</div>
<div class="t" style="top:585.19px;font-size:11px;letter-spacing:-0.20px;right:357.70px;">16.061</div>
<div class="t" style="top:585.19px;font-size:11px;letter-spacing:-0.20px;right:300.70px;">15.701</div>
<div class="t" style="top:585.19px;font-size:11px;letter-spacing:-0.20px;right:242.20px;">15.342</div>
<div class="t" style="top:585.19px;font-size:11px;letter-spacing:-0.20px;right:185.20px;">14.982</div>
<div class="t" style="top:585.19px;font-size:11px;letter-spacing:-0.20px;right:128.20px;">14.622</div>
<div class="t" style="top:585.19px;font-size:11px;letter-spacing:-0.20px;right:69.20px;">14.263</div>
<div class="t" style="top:585.19px;font-size:11px;letter-spacing:-0.20px;right:10.20px;">13.903</div>
<div class="t" style="top:602.19px;font-size:11px;left:84px;">Other Assets</div>
<div class="t" style="top:602.19px;font-size:11px;transform:scaleX(0.913);transform-origin:right center;right:645.00px;">USD</div>
<div class="t" style="top:602.19px;font-size:11px;letter-spacing:-0.20px;right:584.20px;">0</div>
<div class="t" style="top:602.19px;font-size:11px;letter-spacing:-0.20px;right:527.20px;">0</div>
<div class="t" style="top:602.19px;font-size:11px;letter-spacing:-0.20px;right:470.20px;">0</div>
<div class="t" style="top:602.19px;font-size:11px;letter-spacing:-0.20px;right:413.20px;">0</div>
<div class="t" style="top:602.19px;font-size:11px;letter-spacing:-0.20px;right:356.20px;">0</div>
<div class="t" style="top:602.19px;font-size:11px;letter-spacing:-0.20px;right:299.20px;">0</div>
<div class="t" style="top:602.19px;font-size:11px;letter-spacing:-0.20px;right:242.20px;">0</div>
<div class="t" style="top:602.19px;font-size:11px;letter-spacing:-0.20px;right:185.20px;">0</div>
<div class="t" style="top:602.19px;font-size:11px;letter-spacing:-0.20px;right:128.20px;">0</div>
<div class="t" style="top:602.19px;font-size:11px;letter-spacing:-0.20px;right:69.20px;">0</div>
<div class="t" style="top:602.19px;font-size:11px;letter-spacing:-0.20px;right:10.20px;">0</div>
<div class="t" style="top:619.19px;font-size:11px;font-weight:bold;color:#000;letter-spacing:-0.25px;right:687.25px;">Total</div>
<div class="t" style="top:619.19px;font-size:11px;font-weight:bold;color:#000;letter-spacing:-0.40px;right:645.40px;">USD</div>
<div class="t" style="top:619.19px;font-size:11px;font-weight:bold;color:#000;letter-spacing:-0.30px;right:584.30px;">0</div>
<div class="t" style="top:619.19px;font-size:11px;font-weight:bold;color:#000;letter-spacing:-0.30px;right:527.30px;">691.057</div>
<div class="t" style="top:619.19px;font-size:11px;font-weight:bold;color:#000;letter-spacing:-0.30px;right:470.30px;">685.814</div>
<div class="t" style="top:619.19px;font-size:11px;font-weight:bold;color:#000;letter-spacing:-0.30px;right:413.30px;">680.572</div>
<div class="t" style="top:619.19px;font-size:11px;font-weight:bold;color:#000;letter-spacing:-0.30px;right:356.30px;">675.329</div>
<div class="t" style="top:619.19px;font-size:11px;font-weight:bold;color:#000;letter-spacing:-0.30px;right:299.30px;">670.086</div>
<div class="t" style="top:619.19px;font-size:11px;font-weight:bold;color:#000;letter-spacing:-0.30px;right:242.30px;">664.843</div>
<div class="t" style="top:619.19px;font-size:11px;font-weight:bold;color:#000;letter-spacing:-0.30px;right:185.30px;">659.601</div>
<div class="t" style="top:619.19px;font-size:11px;font-weight:bold;color:#000;letter-spacing:-0.30px;right:128.30px;">654.358</div>
<div class="t" style="top:619.19px;font-size:11px;font-weight:bold;color:#000;letter-spacing:-0.30px;right:69.30px;">649.115</div>
<div class="t" style="top:619.19px;font-size:11px;font-weight:bold;color:#000;letter-spacing:-0.30px;right:10.30px;">643.872</div>
</body></html>
